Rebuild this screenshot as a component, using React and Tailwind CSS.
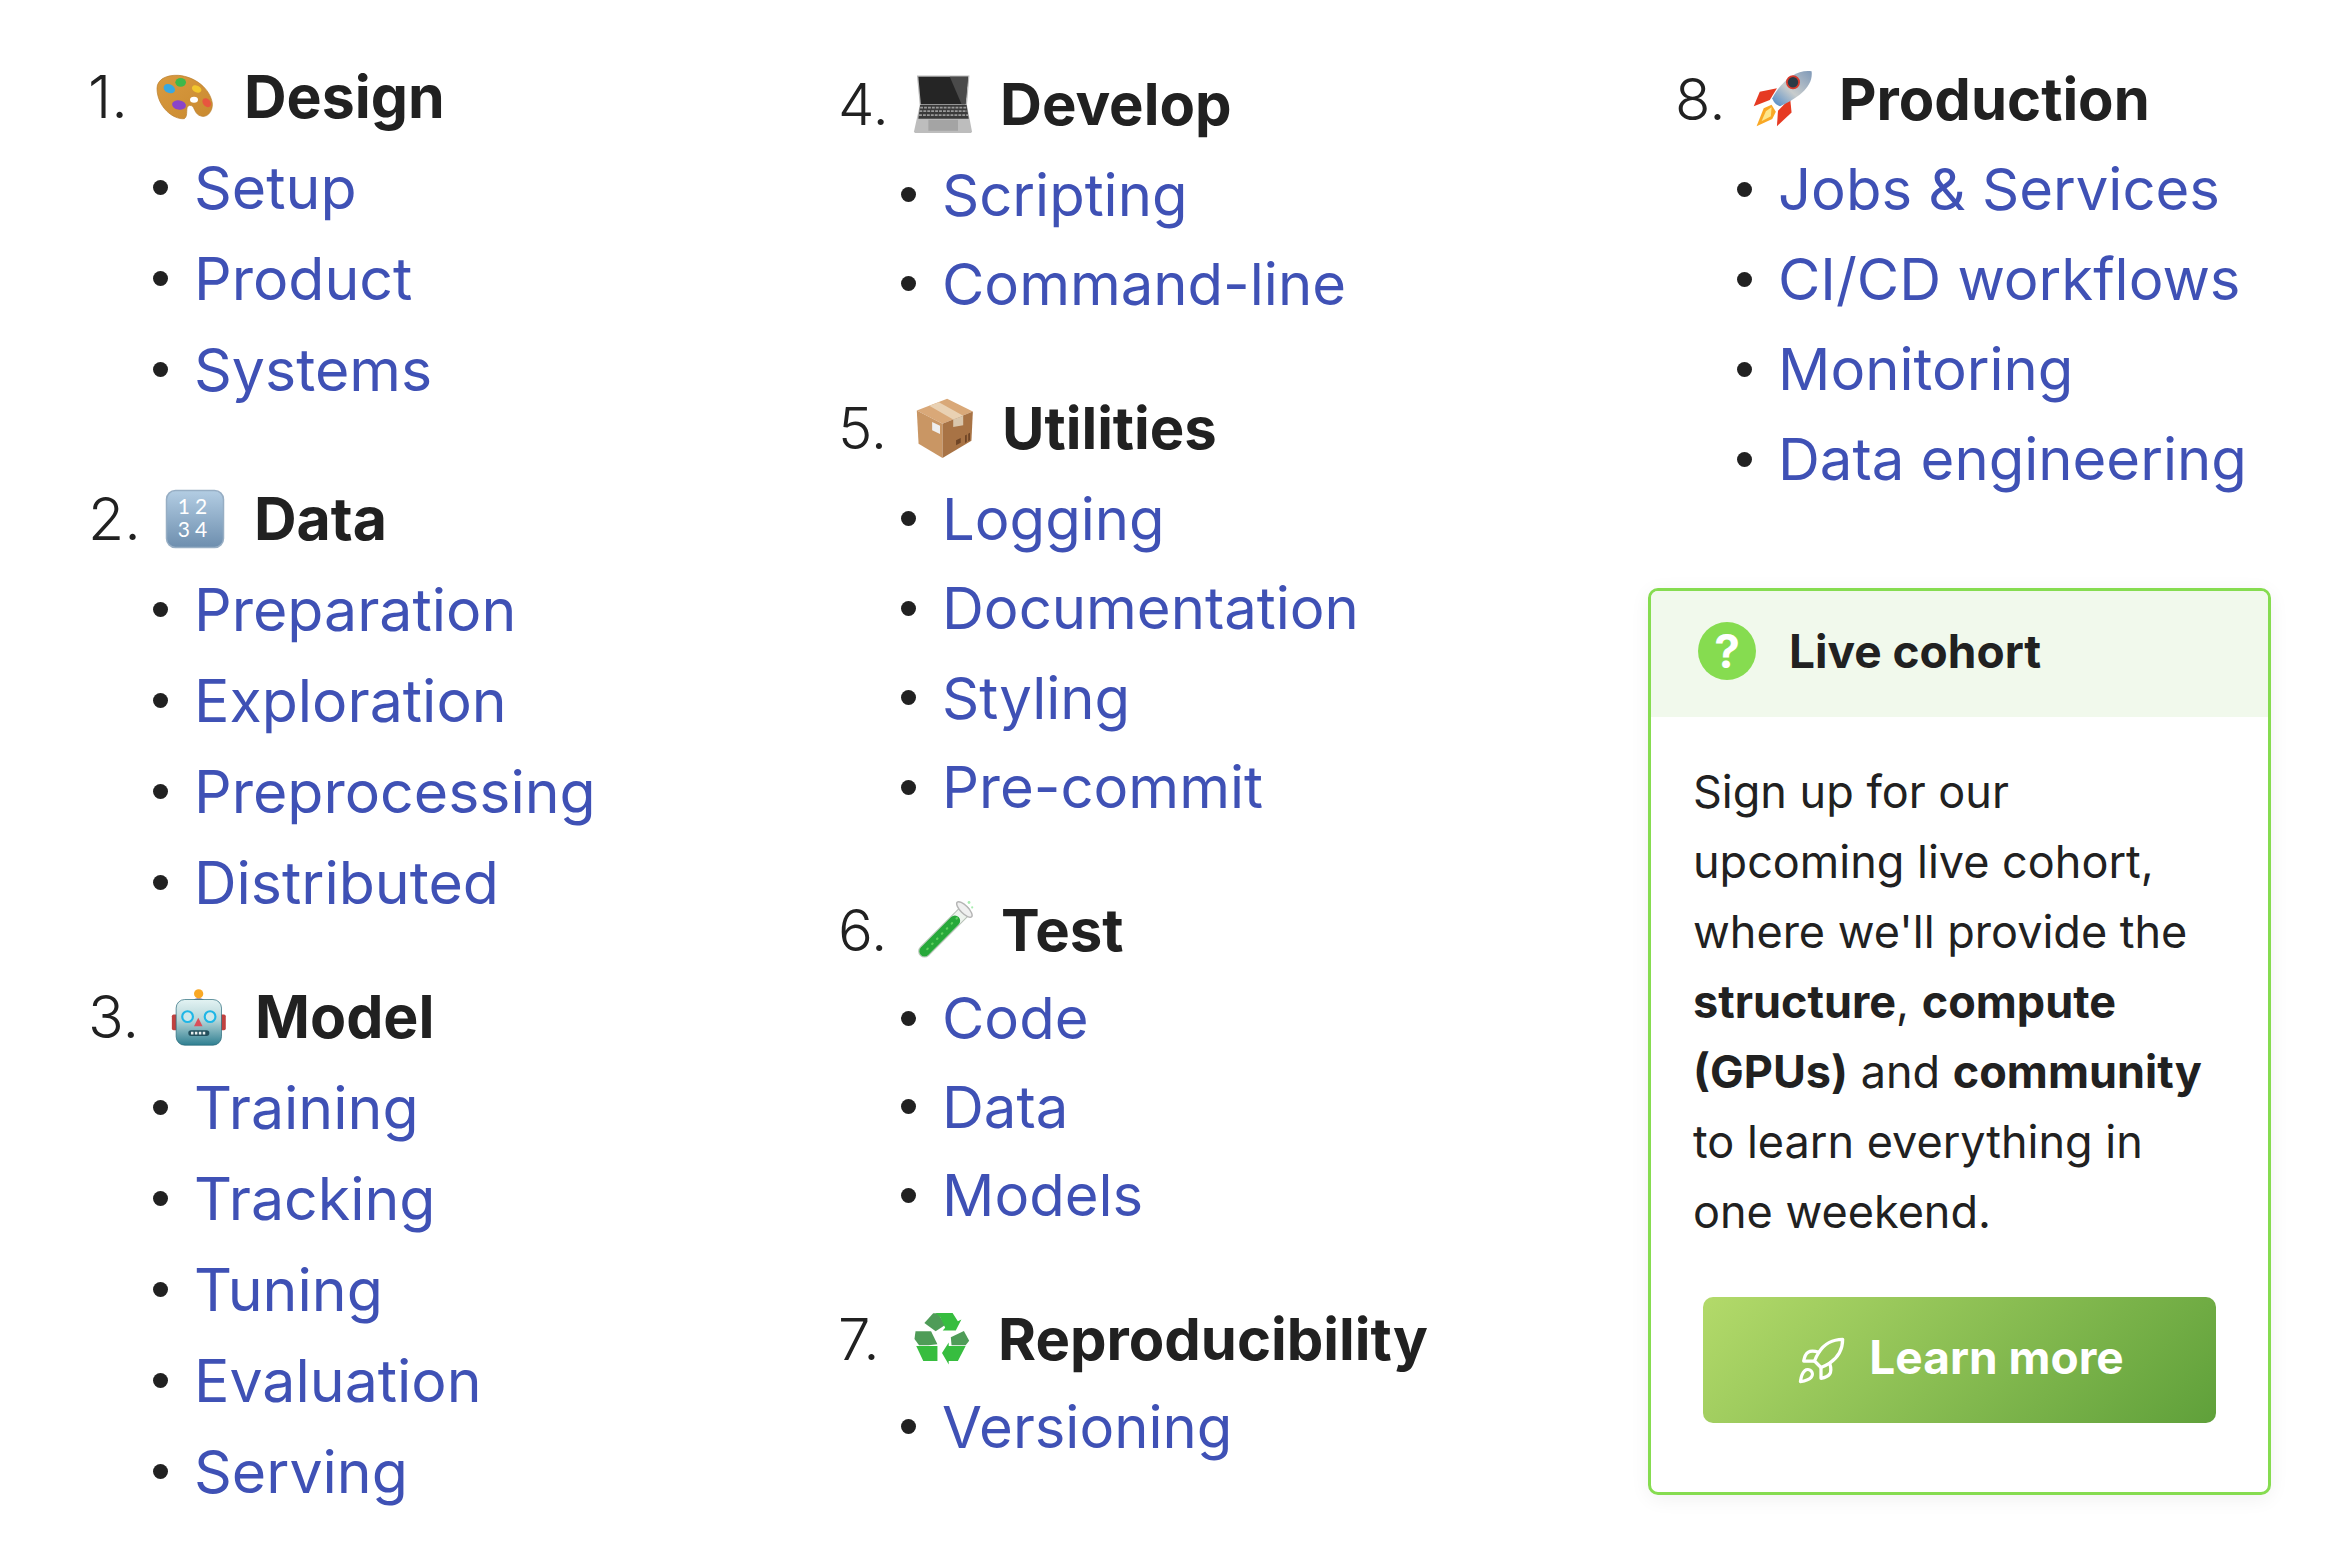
import { Rocket } from "lucide-react";

function Palette() {
  return (
    <svg viewBox="290 81 180 180" className="h-[60px] w-[60px]">
      <defs>
        <linearGradient id="wood" x1="0" y1="0" x2="1" y2="1">
          <stop offset="0" stopColor="#d99a3f" />
          <stop offset="1" stopColor="#c98a30" />
        </linearGradient>
      </defs>
      <path
        d="M296 145C296 118 325 104 360 106C410 110 455 145 462 190C464 215 445 238 422 226C405 216 410 196 394 196C378 198 392 228 378 236C345 240 296 200 296 145Z"
        fill="url(#wood)"
        stroke="#b87c2a"
        strokeWidth="2"
      />
      <ellipse cx="407" cy="179" rx="12" ry="9" fill="#fff" />
      <ellipse cx="333" cy="146" rx="18" ry="13" fill="#3aa8e0" transform="rotate(25 333 146)" />
      <ellipse cx="367" cy="127" rx="16" ry="13" fill="#3fb84a" />
      <ellipse cx="415" cy="147" rx="15" ry="10" fill="#f2c62d" transform="rotate(25 415 147)" />
      <ellipse cx="445" cy="188" rx="15" ry="11" fill="#e8553f" transform="rotate(50 445 188)" />
      <ellipse cx="362" cy="195" rx="21" ry="14" fill="#8b45c9" transform="rotate(10 362 195)" />
    </svg>
  );
}

function Keycap() {
  return (
    <svg viewBox="0 0 60 60" className="h-[60px] w-[60px]">
      <defs>
        <linearGradient id="cap" x1="0" y1="0" x2="0" y2="1">
          <stop offset="0" stopColor="#b3cde3" />
          <stop offset="1" stopColor="#6d8eae" />
        </linearGradient>
      </defs>
      <rect x="1.5" y="1.5" width="57" height="57" rx="9" fill="url(#cap)" stroke="#97aec4" strokeWidth="1.5" />
      <text x="30" y="25" textAnchor="middle" fontSize="21" fill="#fff" letterSpacing="5" fontFamily="Lato, sans-serif">
        12
      </text>
      <text x="30" y="48" textAnchor="middle" fontSize="21" fill="#fff" letterSpacing="5" fontFamily="Lato, sans-serif">
        34
      </text>
    </svg>
  );
}

function Robot() {
  return (
    <svg viewBox="325 80 168 168" className="h-[60px] w-[60px]">
      <defs>
        <linearGradient id="head" x1="0" y1="0" x2="0" y2="1">
          <stop offset="0" stopColor="#e3f3f3" />
          <stop offset="0.45" stopColor="#b5d5d8" />
          <stop offset="1" stopColor="#2f7f91" />
        </linearGradient>
      </defs>
      <rect x="333" y="157" width="16" height="44" rx="5" fill="#c0413f" />
      <rect x="468" y="157" width="16" height="44" rx="5" fill="#c0413f" />
      <path d="M390 122C390 108 426 108 426 122Z" fill="#7a6a9c" />
      <circle cx="408" cy="99" r="13" fill="#f9a825" />
      <rect x="345" y="115" width="127" height="128" rx="24" fill="url(#head)" stroke="#2a6b7a" strokeWidth="2" />
      <circle cx="377" cy="163" r="15" fill="#cfe8ea" stroke="#1fb6e6" strokeWidth="6" />
      <circle cx="440" cy="163" r="15" fill="#cfe8ea" stroke="#1fb6e6" strokeWidth="6" />
      <path d="M407 166L395 190H419Z" fill="#d9505a" />
      <rect x="379" y="201" width="59" height="16" rx="8" fill="#234f5c" />
      <path d="M390 205V213M401 205V213M412 205V213M423 205V213" stroke="#e8eeee" strokeWidth="7" />
    </svg>
  );
}

function Laptop() {
  return (
    <svg viewBox="282 78 168 168" className="h-[60px] w-[60px]">
      <path d="M293 82H440L433 166H301Z" fill="#b9b9b9" />
      <path d="M297 86H436L429 163H304Z" fill="#252525" />
      <path d="M385 86H436L429 163H418Z" fill="#4a4a4a" />
      <path d="M301 165H433L447 238L445 243H287L285 238Z" fill="#bdbdbd" />
      <path d="M302 165H432L438 203H297Z" fill="#3a3a3a" />
      <path d="M302 172H432M300 182H434M299 193H436" stroke="#9a9a9a" strokeWidth="5" strokeDasharray="8 3" />
      <rect x="325" y="206" width="83" height="31" fill="#a4a4a4" />
    </svg>
  );
}

function PackageBox() {
  return (
    <svg viewBox="285 60 168 168" className="h-[60px] w-[60px]">
      <path d="M290 95L375 62L447 98L362 132Z" fill="#d9a878" />
      <path d="M290 95L362 132V228L295 188Z" fill="#c99664" />
      <path d="M447 98L362 132V228L443 180Z" fill="#a87345" />
      <path d="M325 82L352 72L420 110L392 120Z" fill="#e9d1b3" />
      <path d="M392 120L420 110V136L392 141Z" fill="#d9c6ac" />
      <path d="M333 127L355 138V161L333 150Z" fill="#eeeeee" />
      <path d="M400 178L413 172V185L400 192ZM425 165L430 162V183L425 186ZM434 160L439 157V178L434 181Z" fill="#6f4526" />
    </svg>
  );
}

function TestTube() {
  return (
    <svg viewBox="285 65 170 170" className="h-[60px] w-[60px]">
      <path d="M424 98L312 210" stroke="#b8c4b8" strokeWidth="36" strokeLinecap="round" />
      <path d="M424 98L312 210" stroke="#eef3ee" strokeWidth="30" strokeLinecap="round" />
      <path d="M398 124L312 210" stroke="#27a83a" strokeWidth="30" strokeLinecap="round" />
      <path d="M404 116L318 206" stroke="#5fd05f" strokeWidth="6" strokeLinecap="round" strokeDasharray="2 18" />
      <ellipse cx="425" cy="92" rx="29" ry="11" transform="rotate(45 425 92)" fill="#f0f0f0" stroke="#b5b5b5" strokeWidth="4" />
      <circle cx="438" cy="72" r="4" fill="#a8eeb0" />
      <circle cx="447" cy="86" r="3" fill="#a8eeb0" />
    </svg>
  );
}

function Recycle() {
  return (
    <svg viewBox="278 65 170 170" className="h-[60px] w-[60px]">
      <path d="M313 105L338 77H352L372 110L345 128Z" fill="#4f9c58" />
      <path d="M345 76H393L408 100L418 95L402 126H365L372 118L358 88Z" fill="#37bd3f" />
      <path d="M288 128L332 128L350 165L325 168H298L285 150Z" fill="#4f9c58" />
      <path d="M290 170H350V212H310Z" fill="#37bd3f" />
      <path d="M425 127L440 155L430 168H390L388 145Z" fill="#4f9c58" />
      <path d="M440 168L430 170L408 212H382V222L363 190L382 160V170H430Z" fill="#37bd3f" />
    </svg>
  );
}

function RocketEmoji() {
  return (
    <svg viewBox="278 68 168 168" className="h-[60px] w-[60px]">
      <defs>
        <linearGradient id="hull" x1="0" y1="1" x2="1" y2="0">
          <stop offset="0" stopColor="#4a87c7" />
          <stop offset="0.45" stopColor="#c8cccc" />
          <stop offset="1" stopColor="#7f99b8" />
        </linearGradient>
      </defs>
      <path d="M345 122L297 132L280 172L325 155Z" fill="#e63a22" />
      <path d="M382 150L386 190L345 228L348 185Z" fill="#e63a22" />
      <path d="M330 168L308 178L288 228L332 208L342 188Z" fill="#f9a825" />
      <path d="M330 175L314 186L302 214L328 200Z" fill="#fde68a" />
      <path d="M442 74C400 68 358 100 332 150C334 160 344 170 354 172C402 150 448 118 442 74Z" fill="url(#hull)" />
      <circle cx="390" cy="105" r="17" fill="#2b3a46" stroke="#d83a2c" strokeWidth="5" />
    </svg>
  );
}

const columns = [
  {
    className: "w-[838px] pt-[51px] pl-[88px] text-[59px]",
    listClass: "pl-[65px]",
    gapClass: "gap-[26px]",
    sections: [
      { n: "1.", icon: <Palette />, title: "Design", numClass: "w-[67px]", iconClass: "mr-[29px]", headClass: "h-[91px]", rowClass: "h-[91px]", items: ["Setup", "Product", "Systems"] },
      { n: "2.", icon: <Keycap />, title: "Data", numClass: "w-[77px]", iconClass: "mr-[29px]", headClass: "h-[91px] mt-[58px]", rowClass: "h-[91px]", items: ["Preparation", "Exploration", "Preprocessing", "Distributed"] },
      { n: "3.", icon: <Robot />, title: "Model", numClass: "w-[81px]", iconClass: "mr-[26px]", headClass: "h-[91px] mt-[43px]", rowClass: "h-[91px]", items: ["Training", "Tracking", "Tuning", "Evaluation", "Serving"] },
    ],
  },
  {
    className: "w-[810px] pt-[58px]",
    listClass: "pl-[63px]",
    gapClass: "gap-[26px]",
    sections: [
      { n: "4.", icon: <Laptop />, title: "Develop", numClass: "w-[75px]", iconClass: "mr-[27px]", headClass: "h-[92px]", rowClass: "h-[89px]", items: ["Scripting", "Command-line"] },
      { n: "5.", icon: <PackageBox />, title: "Utilities", numClass: "w-[77px]", iconClass: "mr-[27px]", headClass: "h-[92px] mt-[54px]", rowClass: "h-[89.5px]", items: ["Logging", "Documentation", "Styling", "Pre-commit"] },
      { n: "6.", icon: <TestTube />, title: "Test", numClass: "w-[77px]", iconClass: "mr-[26px]", headClass: "h-[88px] mt-[54px]", rowClass: "h-[88.5px]", items: ["Code", "Data", "Models"] },
      { n: "7.", icon: <Recycle />, title: "Reproducibility", numClass: "w-[74px]", iconClass: "mr-[26px]", headClass: "h-[88px] mt-[55px]", rowClass: "h-[88px]", items: ["Versioning"] },
    ],
  },
  {
    className: "w-[624px] pt-[54px]",
    listClass: "pl-[89px]",
    gapClass: "gap-[26px]",
    sections: [
      { n: "8.", icon: <RocketEmoji />, title: "Production", numClass: "w-[78px] ml-[27px]", iconClass: "mr-[26px]", headClass: "h-[90px]", rowClass: "h-[90px]", items: ["Jobs & Services", "CI/CD workflows", "Monitoring", "Data engineering"] },
    ],
  },
];

function Section({ section, listClass, gapClass }) {
  return (
    <section>
      <h2 className={`flex items-center ${section.headClass}`}>
        <span className={`shrink-0 font-light ${section.numClass}`}>{section.n}</span>
        <span className={`shrink-0 ${section.iconClass}`}>{section.icon}</span>
        <span className="font-bold">{section.title}</span>
      </h2>
      <ul className={listClass}>
        {section.items.map((item) => (
          <li key={item} className={`flex items-center ${gapClass} ${section.rowClass}`}>
            <span className="h-[15px] w-[15px] shrink-0 rounded-full bg-[#212121]" />
            <a href="#" className="text-[#3f51b5]">
              {item}
            </a>
          </li>
        ))}
      </ul>
    </section>
  );
}

function LiveCohort() {
  return (
    <div className="mt-[84px] h-[907px] w-[623px] overflow-hidden rounded-[10px] border-[3px] border-[#86dc50] bg-white shadow-[0_4px_20px_rgba(0,0,0,0.06)]">
      <div className="flex h-[126px] items-center bg-[#f1f9ec] pb-[6px] pl-[47px]">
        <span className="flex h-[58px] w-[58px] items-center justify-center rounded-full bg-[#86dc50] text-[46px] font-bold leading-none text-white">
          ?
        </span>
        <span className="ml-[33px] text-[46px] font-bold leading-none">Live cohort</span>
      </div>
      <div className="pl-[42px] pt-[40px]">
        <p className="whitespace-nowrap text-[45px] leading-[70px]">
          Sign up for our
          <br />
          upcoming live cohort,
          <br />
          where we'll provide the
          <br />
          <strong>structure</strong>, <strong>compute</strong>
          <br />
          <strong>(GPUs)</strong> and <strong>community</strong>
          <br />
          to learn everything in
          <br />
          one weekend.
        </p>
        <a
          href="#"
          className="ml-[10px] mt-[50px] flex h-[126px] w-[513px] items-center justify-center gap-[22px] rounded-[10px] bg-[linear-gradient(135deg,#b3da6a,#5fa03a)] pb-[6px] text-[46px] font-bold text-white"
        >
          <Rocket size={52} strokeWidth={1.5} className="mt-[8px]" />
          Learn more
        </a>
      </div>
    </div>
  );
}

export default function App() {
  return (
    <div className="flex h-[1562px] w-[2336px] overflow-hidden bg-white font-['Inter',sans-serif] text-[58px] leading-none text-[#212121]">
      {columns.map((col) => (
        <div key={col.sections[0].n} className={col.className}>
          {col.sections.map((section) => (
            <Section key={section.n} section={section} listClass={col.listClass} gapClass={col.gapClass} />
          ))}
          {col.sections[0].n === "8." && <LiveCohort />}
        </div>
      ))}
    </div>
  );
}
